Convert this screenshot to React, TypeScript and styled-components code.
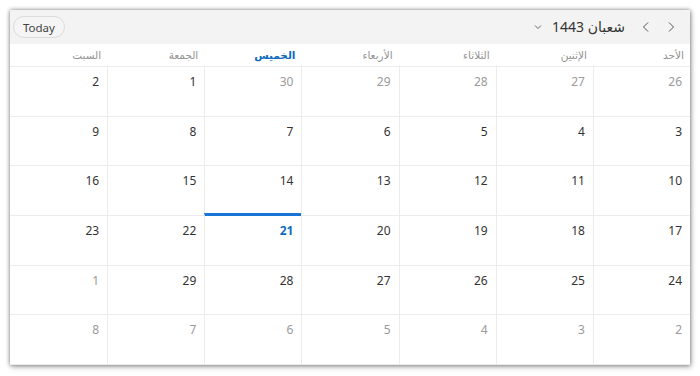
import styled, { createGlobalStyle } from 'styled-components'

const GlobalStyle = createGlobalStyle`
  html, body {
    margin: 0;
    padding: 0;
    background: #ffffff;
    font-family: "Noto Sans", "DejaVu Sans", sans-serif;
  }
`

type Day = { n: number; other?: boolean; today?: boolean }

const dayNames = ['الأحد', 'الإثنين', 'الثلاثاء', 'الأربعاء', 'الخميس', 'الجمعة', 'السبت']

const weeks: Day[][] = [
  [{ n: 26, other: true }, { n: 27, other: true }, { n: 28, other: true }, { n: 29, other: true }, { n: 30, other: true }, { n: 1 }, { n: 2 }],
  [3, 4, 5, 6, 7, 8, 9].map((n) => ({ n })),
  [10, 11, 12, 13, 14, 15, 16].map((n) => ({ n })),
  [{ n: 17 }, { n: 18 }, { n: 19 }, { n: 20 }, { n: 21, today: true }, { n: 22 }, { n: 23 }],
  [{ n: 24 }, { n: 25 }, { n: 26 }, { n: 27 }, { n: 28 }, { n: 29 }, { n: 1, other: true }],
  [2, 3, 4, 5, 6, 7, 8].map((n) => ({ n, other: true })),
]

export default function App() {
  return (
    <>
      <GlobalStyle />
      <Page>
        <Window dir="rtl">
          <Toolbar>
            <NavGroup>
              <NavButton aria-label="previous">
                <svg width="10" height="12" viewBox="0 0 10 12">
                  <path d="M3 1.5 L7.5 6 L3 10.5" fill="none" stroke="#555" strokeWidth="1" />
                </svg>
              </NavButton>
              <NavButton aria-label="next">
                <svg width="10" height="12" viewBox="0 0 10 12">
                  <path d="M7 1.5 L2.5 6 L7 10.5" fill="none" stroke="#555" strokeWidth="1" />
                </svg>
              </NavButton>
              <Title>
                <span>شعبان 1443</span>
                <svg width="8" height="6" viewBox="0 0 8 6">
                  <path d="M1 1.5 L4 4.5 L7 1.5" fill="none" stroke="#666" strokeWidth="1" />
                </svg>
              </Title>
            </NavGroup>
            <TodayButton dir="ltr">Today</TodayButton>
          </Toolbar>
          <DayNames>
            {dayNames.map((d, i) => (
              <DayName key={d} $active={i === 4}>
                {d}
              </DayName>
            ))}
          </DayNames>
          <Grid>
            {weeks.flat().map((d, i) => (
              <Cell key={i} $today={d.today} $lastCol={i % 7 === 6}>
                <DateNum $other={d.other} $today={d.today}>
                  {d.n}
                </DateNum>
              </Cell>
            ))}
          </Grid>
        </Window>
      </Page>
    </>
  )
}

// ========== Styled Components ==========

const Page = styled.div`
  width: 700px;
  height: 376px;
  padding: 10px;
  box-sizing: border-box;
`

const Window = styled.div`
  width: 680px;
  height: 355px;
  background: #ffffff;
  box-shadow: 0 0 4px rgba(0, 0, 0, 0.45), 1px 2px 6px rgba(0, 0, 0, 0.25);
  display: flex;
  flex-direction: column;
  overflow: hidden;
`

const Toolbar = styled.div`
  height: 34px;
  flex: none;
  background: #f3f3f3;
  display: flex;
  align-items: center;
  justify-content: space-between;
  padding: 0 9px 0 3px;
`

const NavGroup = styled.div`
  display: flex;
  align-items: center;
  gap: 5px;
`

const NavButton = styled.div`
  width: 20px;
  height: 20px;
  display: flex;
  align-items: center;
  justify-content: center;
`

const Title = styled.div`
  display: flex;
  align-items: center;
  gap: 10px;
  margin-right: 6px;
  font-size: 14px;
  color: #333;

  span {
    line-height: 20px;
  }
`

const TodayButton = styled.div`
  height: 20px;
  padding: 0 9px;
  border: 1px solid #dcdcdc;
  border-radius: 11px;
  background: #f5f5f5;
  font-size: 11.5px;
  color: #444;
  display: flex;
  align-items: center;
`

const DayNames = styled.div`
  height: 22px;
  flex: none;
  display: grid;
  grid-template-columns: repeat(7, 1fr);
  border-bottom: 1px solid #ececec;
`

const DayName = styled.div<{ $active?: boolean }>`
  font-size: 10.5px;
  padding: 0 6px;
  line-height: 22px;
  color: ${(p) => (p.$active ? '#0f6cbd' : '#939393')};
  font-weight: ${(p) => (p.$active ? 700 : 400)};
`

const Grid = styled.div`
  flex: 1;
  display: grid;
  grid-template-columns: repeat(7, 1fr);
  grid-template-rows: repeat(6, 1fr);
`

const Cell = styled.div<{ $today?: boolean; $lastCol?: boolean }>`
  border-left: ${(p) => (p.$lastCol ? 'none' : '1px solid #ececec')};
  border-bottom: 1px solid #ececec;
  border-top: 3px solid ${(p) => (p.$today ? '#1a73d6' : 'transparent')};
  margin-top: -3px;
  padding: 6px 8px 0;
`

const DateNum = styled.div<{ $other?: boolean; $today?: boolean }>`
  font-size: 12px;
  color: ${(p) => (p.$today ? '#0f6cbd' : p.$other ? '#9a9a9a' : '#333')};
  font-weight: ${(p) => (p.$today ? 700 : 400)};
`
